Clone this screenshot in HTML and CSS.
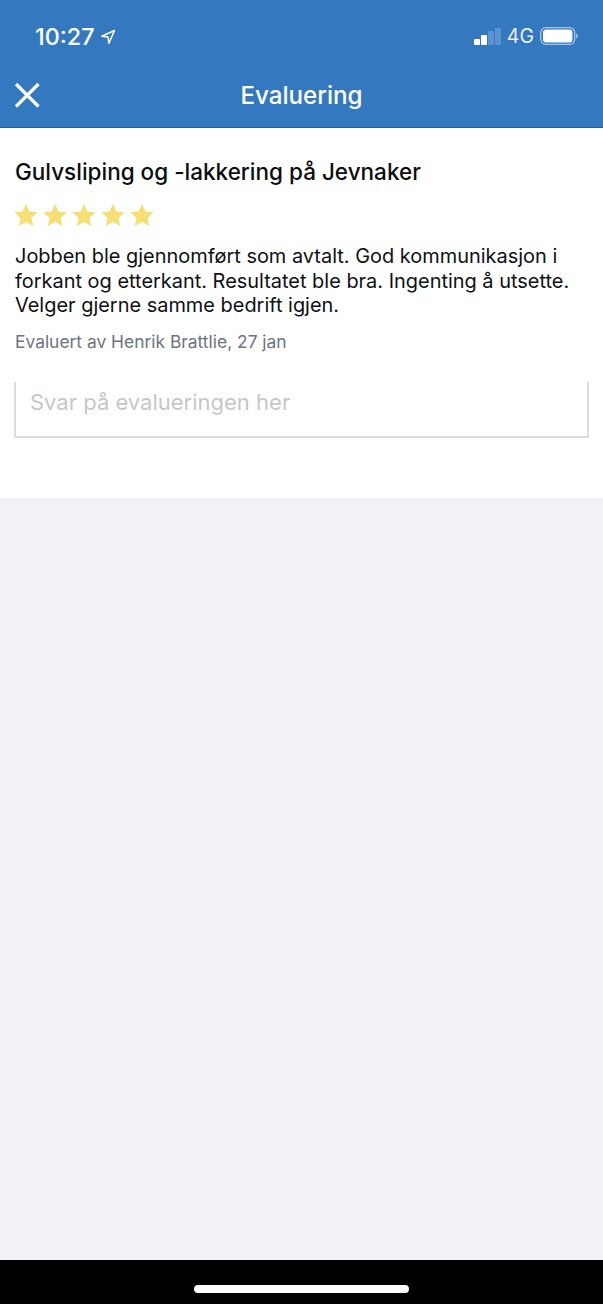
FILE: index.html
```html
<!DOCTYPE html>
<html lang="no">
<head>
<meta charset="utf-8">
<title>Evaluering</title>
<link rel="stylesheet" href="styles.css">
</head>
<body>
<div class="screen">
  <header class="header">
    <div class="status">
      <div class="status-left">
        <span class="time">10:27</span>
        <svg class="loc" width="16" height="16" viewBox="0 0 16 16"><path d="M14.500 1.500 1.800 7.300l6.200.6.900 6.400z" fill="none" stroke="#fff" stroke-width="1.500" stroke-linejoin="round"/></svg>
      </div>
      <div class="status-right">
        <div class="signal">
          <span class="bar b1"></span><span class="bar b2"></span><span class="bar b3"></span><span class="bar b4"></span>
        </div>
        <span class="net">4G</span>
        <svg class="battery" width="38" height="18" viewBox="0 0 38 18"><rect x="0.700" y="0.700" width="34" height="16.600" rx="5" fill="none" stroke="#a9c6e6" stroke-width="1.300"/><rect x="3" y="2.600" width="29.400" height="12.800" rx="3" fill="#fff"/><path d="M36 6.500c1.200.4 1.800 1.400 1.800 2.500s-.6 2.100-1.800 2.500z" fill="#a9c6e6"/></svg>
      </div>
    </div>
    <div class="nav">
      <svg class="close" width="26" height="26" viewBox="0 0 26 26"><path d="M2 2 24.500 24.500M24.500 2 2 24.500" stroke="#fff" stroke-width="3.200" fill="none"/></svg>
      <h1 class="nav-title">Evaluering</h1>
    </div>
  </header>
  <main class="card">
    <h2 class="title">Gulvsliping og -lakkering på Jevnaker</h2>
    <div class="stars">
      <svg class="star" viewBox="0 0 24 24"><path d="M12 .8l3.400 7.600 8.100.9-6 5.600 1.700 8.200L12 19l-7.200 4.100 1.700-8.200-6-5.600 8.100-.9z"/></svg>
      <svg class="star" viewBox="0 0 24 24"><path d="M12 .8l3.400 7.600 8.100.9-6 5.600 1.700 8.200L12 19l-7.200 4.100 1.700-8.200-6-5.600 8.100-.9z"/></svg>
      <svg class="star" viewBox="0 0 24 24"><path d="M12 .8l3.400 7.600 8.100.9-6 5.600 1.700 8.200L12 19l-7.200 4.100 1.700-8.200-6-5.600 8.100-.9z"/></svg>
      <svg class="star" viewBox="0 0 24 24"><path d="M12 .8l3.400 7.600 8.100.9-6 5.600 1.700 8.200L12 19l-7.200 4.100 1.700-8.200-6-5.600 8.100-.9z"/></svg>
      <svg class="star" viewBox="0 0 24 24"><path d="M12 .8l3.400 7.600 8.100.9-6 5.600 1.700 8.200L12 19l-7.200 4.100 1.700-8.200-6-5.600 8.100-.9z"/></svg>
    </div>
    <p class="body-text">Jobben ble gjennomført som avtalt. God kommunikasjon i<br>forkant og etterkant. Resultatet ble bra. Ingenting å utsette.<br>Velger gjerne samme bedrift igjen.</p>
    <p class="meta">Evaluert av Henrik Brattlie, 27 jan</p>
    <div class="reply"><span class="placeholder">Svar på evalueringen her</span></div>
  </main>
  <div class="rest"></div>
  <footer class="home-bar"><span class="home-indicator"></span></footer>
</div>
</body>
</html>
```
FILE: styles.css
```css
* { box-sizing: border-box; }
html, body { margin: 0; padding: 0; }
body { font-family: Inter, "Liberation Sans", sans-serif; background: #f0f2f6; }
.screen { width: 603px; height: 1304px; display: flex; flex-direction: column; overflow: hidden; }
.header { height: 128px; background: #3478c0; border-bottom: 1px solid #2b639f; color: #fff; flex: none; }
.status { height: 71px; display: flex; justify-content: space-between; align-items: center; padding: 1px 25px 0 35px; }
.status-left { display: flex; align-items: center; gap: 6px; padding-top: 1px; }
.time { font-size: 23.300px; font-weight: 500; line-height: 28px; }
.loc { display: block; }
.status-right { display: flex; align-items: center; }
.signal { display: flex; align-items: flex-end; gap: 1.500px; height: 18px; margin-right: 6px; }
.bar { width: 5.500px; border-radius: 1px; background: #fff; display: block; }
.b1 { height: 6px; }
.b2 { height: 10px; }
.b3 { height: 14px; background: #5b93d0; }
.b4 { height: 17px; background: #5b93d0; }
.net { font-size: 19.500px; font-weight: 400; margin-right: 6px; color: #e8f0f9; }
.battery { display: block; }
.nav { height: 56px; display: flex; align-items: center; justify-content: center; position: relative; }
.close { position: absolute; left: 14px; top: 11px; }
.nav-title { margin: 0 0 6px; font-size: 24.200px; font-weight: 500; line-height: 28px; }
.card { background: #fff; height: 370px; padding: 30px 15px 0; flex: none; }
.title { margin: 0; font-size: 22.500px; font-weight: 450; line-height: 28px; color: #0b0d10; }
.stars { display: flex; gap: 5px; margin: 17px 0 0 -1px; }
.star { width: 24px; height: 24px; fill: #f6df74; display: block; }
.body-text { margin: 17px 0 0; font-size: 19.950px; line-height: 24.500px; color: #0e1013; }
.meta { margin: 12px 0 0; font-size: 17.400px; line-height: 24px; color: #6d7480; }
.reply { margin-top: 28px; height: 56px; width: 575px; margin-left: -1px; border: 2px solid #dcdcdc; border-top: 0; padding: 7px 14px 0; }
.placeholder { font-size: 22px; line-height: 26px; color: #c5c7cb; display: block; }
.rest { flex: 1; background: #f0f2f6; }
.home-bar { height: 44px; background: #000; flex: none; display: flex; justify-content: center; padding-top: 25px; }
.home-indicator { width: 215px; height: 8px; border-radius: 4px; background: #fff; display: block; }
```
